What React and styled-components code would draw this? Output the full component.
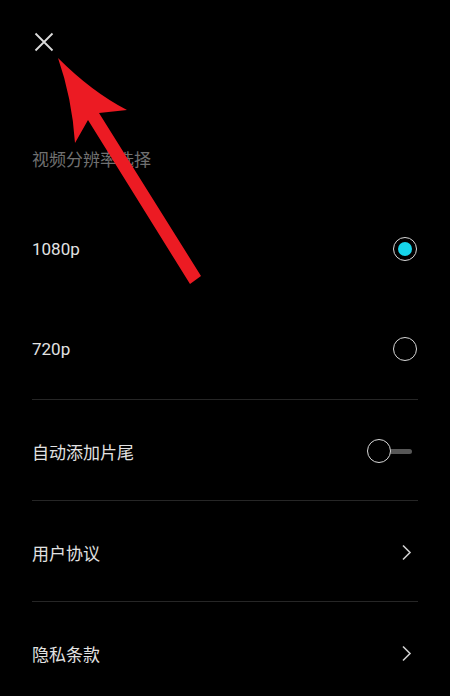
import React from "react";
import styled, { createGlobalStyle } from "styled-components";

const GlobalStyle = createGlobalStyle`
  html, body {
    margin: 0;
    padding: 0;
    background: #000;
  }
  * {
    box-sizing: border-box;
  }
`;

const rows = [
  { id: "1080", label: "1080p", type: "radio", checked: true },
  { id: "720", label: "720p", type: "radio", checked: false },
  { id: "tail", label: "自动添加片尾", type: "toggle", divided: true },
  { id: "terms", label: "用户协议", type: "link", divided: true },
  { id: "privacy", label: "隐私条款", type: "link", divided: true },
];

function Control({ row }) {
  if (row.type === "radio") {
    return <Radio>{row.checked && <RadioDot />}</Radio>;
  }
  if (row.type === "toggle") {
    return (
      <Toggle>
        <Knob />
        <Track />
      </Toggle>
    );
  }
  return (
    <Chevron width="11" height="17" viewBox="0 0 11 17">
      <path d="M2 1.5 L9 8.5 L2 15.5" fill="none" stroke="#cfcfcf" strokeWidth="1.6" />
    </Chevron>
  );
}

function App() {
  return (
    <Page>
      <GlobalStyle />
      <CloseButton aria-label="关闭">
        <svg width="20" height="20" viewBox="0 0 20 20">
          <path d="M1.5 1.5 L18.5 18.5 M18.5 1.5 L1.5 18.5" stroke="#dcdcdc" strokeWidth="1.8" />
        </svg>
      </CloseButton>
      <SectionLabel>视频分辨率选择</SectionLabel>
      <List>
        {rows.map((row) => (
          <Row key={row.id} $divided={row.divided}>
            <RowText>{row.label}</RowText>
            <Control row={row} />
          </Row>
        ))}
      </List>
      <Arrow width="220" height="300" viewBox="0 0 220 300">
        <path
          d="M58 58 Q92 92 127 110 L99 113 L201 276 L190 284 L88 120 L75 143 Q72 98 58 58 Z"
          fill="#ec1b23"
        />
      </Arrow>
    </Page>
  );
}

export default App;

const Page = styled.div`
  position: relative;
  min-height: 696px;
  padding: 0 32px;
  background: #000;
  font-family: Roboto, "Noto Sans CJK SC", sans-serif;
  overflow: hidden;
`;

const CloseButton = styled.button`
  display: block;
  margin: 32px 0 0 2px;
  padding: 0;
  width: 20px;
  height: 20px;
  background: none;
  border: none;
  svg {
    display: block;
  }
`;

const SectionLabel = styled.div`
  margin-top: 96px;
  height: 51px;
  font-size: 17px;
  line-height: 24px;
  color: #707070;
`;

const List = styled.div`
  display: flex;
  flex-direction: column;
`;

const Row = styled.div`
  display: flex;
  align-items: center;
  justify-content: space-between;
  height: ${(p) => (p.$divided ? "101px" : "100px")};
  border-top: ${(p) => (p.$divided ? "1px solid #262626" : "none")};
  padding-top: ${(p) => (p.$divided ? "2px" : "0")};
`;

const RowText = styled.span`
  font-size: 17px;
  color: #e2e2e2;
`;

const Radio = styled.span`
  display: flex;
  align-items: center;
  justify-content: center;
  width: 24px;
  height: 24px;
  margin-right: 1px;
  border: 1.5px solid #d8d8d8;
  border-radius: 50%;
`;

const RadioDot = styled.span`
  width: 14px;
  height: 14px;
  border-radius: 50%;
  background: #16d5ea;
`;

const Toggle = styled.span`
  display: flex;
  align-items: center;
  margin-right: 6px;
`;

const Knob = styled.span`
  position: relative;
  z-index: 1;
  width: 24px;
  height: 24px;
  border: 1.5px solid #dadada;
  border-radius: 50%;
  background: #000;
`;

const Track = styled.span`
  width: 24px;
  height: 5px;
  margin-left: -3px;
  border-radius: 3px;
  background: #575757;
`;

const Chevron = styled.svg`
  display: block;
  margin-right: 6px;
`;

const Arrow = styled.svg`
  position: absolute;
  left: 0;
  top: 0;
  pointer-events: none;
`;
